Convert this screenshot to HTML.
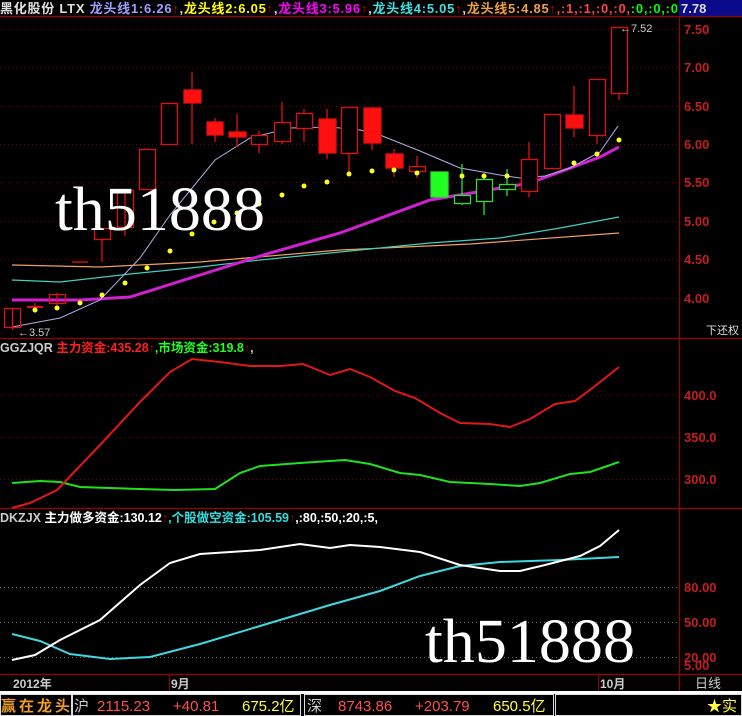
<!DOCTYPE html>
<html><head><meta charset="utf-8"><style>
html,body{margin:0;padding:0;background:#000;width:742px;height:716px;overflow:hidden}
svg{display:block}
text{font-family:"Liberation Sans","Noto Sans CJK SC",sans-serif}
text.wm{font-family:"Liberation Serif","DejaVu Serif",serif}
</style></head><body>
<svg width="742" height="716" viewBox="0 0 742 716" xmlns="http://www.w3.org/2000/svg">
<rect width="742" height="716" fill="#000"/>
<!-- header -->
<rect x="679" y="0" width="63" height="16" fill="#0a0a8a"/>
<text x="0" y="13" font-size="13" font-weight="bold" textLength="678" lengthAdjust="spacing"><tspan fill="#e0e0e0">黑化股份 LTX </tspan><tspan fill="#a0a0ff">龙头线1:6.26</tspan><tspan fill="#c00">↑</tspan><tspan fill="#ddd">,</tspan><tspan fill="#ffff00">龙头线2:6.05</tspan><tspan fill="#c00">↑</tspan><tspan fill="#ddd">,</tspan><tspan fill="#ff00ff">龙头线3:5.96</tspan><tspan fill="#c00">↑</tspan><tspan fill="#ddd">,</tspan><tspan fill="#40e0e0">龙头线4:5.05</tspan><tspan fill="#c00">↑</tspan><tspan fill="#ddd">,</tspan><tspan fill="#f0a040">龙头线5:4.85</tspan><tspan fill="#c00">↑</tspan><tspan fill="#f44">,:1,:1,:0,:0,</tspan><tspan fill="#0f0">:0,:0,:0</tspan></text>
<text x="681" y="13" font-size="13" font-weight="bold" fill="#ddd">7.78</text>
<!-- frame lines -->
<g stroke="#900" stroke-width="1.2" fill="none">
<line x1="679.5" y1="16" x2="679.5" y2="692"/>
<line x1="0" y1="338.5" x2="742" y2="338.5"/>
<line x1="0" y1="508.5" x2="742" y2="508.5"/>
<line x1="0" y1="674.5" x2="742" y2="674.5"/>
<line x1="0" y1="16.5" x2="742" y2="16.5"/>
</g>
<!-- grid -->
<g stroke="#700" stroke-width="1" stroke-dasharray="1,3">
<line x1="0" y1="29.5" x2="679" y2="29.5"/><line x1="0" y1="67.5" x2="679" y2="67.5"/>
<line x1="0" y1="106.5" x2="679" y2="106.5"/><line x1="0" y1="144.5" x2="679" y2="144.5"/>
<line x1="0" y1="182.5" x2="679" y2="182.5"/><line x1="0" y1="221.5" x2="679" y2="221.5"/>
<line x1="0" y1="259.5" x2="679" y2="259.5"/><line x1="0" y1="298.5" x2="679" y2="298.5"/>
<line x1="0" y1="395.5" x2="679" y2="395.5"/><line x1="0" y1="437.5" x2="679" y2="437.5"/><line x1="0" y1="479.5" x2="679" y2="479.5"/>
<line x1="0" y1="587.5" x2="679" y2="587.5" stroke="#666"/><line x1="0" y1="622.5" x2="679" y2="622.5" stroke="#666"/><line x1="0" y1="657.5" x2="679" y2="657.5" stroke="#666"/>
</g>
<!-- axis labels -->
<g font-size="13" font-weight="bold" fill="#c41e1e">
<text x="684" y="34">7.50</text><text x="684" y="72">7.00</text><text x="684" y="111">6.50</text><text x="684" y="149">6.00</text>
<text x="684" y="187">5.50</text><text x="684" y="226">5.00</text><text x="684" y="264">4.50</text><text x="684" y="303">4.00</text>
<text x="684" y="400">400.0</text><text x="684" y="442">350.0</text><text x="684" y="484">300.0</text>
<text x="684" y="592">80.00</text><text x="684" y="627">50.00</text><text x="684" y="662">20.00</text><text x="684" y="670">5.00</text>
</g>
<text x="706" y="334" font-size="11" fill="#ddd">下还权</text>
<!-- MA lines -->
<polyline fill="none" stroke="#f0a060" stroke-width="1.2" points="12,265 100,267 200,262 340,250 470,244 619,233"/>
<polyline fill="none" stroke="#40d0c0" stroke-width="1.2" points="12,280 60,282 130,274 200,267 260,260 340,252 430,243 500,238 560,228 619,217"/>
<polyline fill="none" stroke="#d020d0" stroke-width="3" points="12,300 80,300 130,297 200,275 270,253 340,233 430,200 530,183 600,157 619,147"/>
<polyline fill="none" stroke="#b0b0e8" stroke-width="1" points="12,327 60,318 100,300 140,258 170,215 215,160 250,138 290,128 330,127 360,130 380,135 420,151 460,168 500,175 520,178 545,176 570,168 600,152 618,126"/>
<!-- candles -->
<g stroke="#e01010" stroke-width="1.3">
<line x1="12.5" y1="308" x2="12.5" y2="330"/><rect x="4.5" y="308.5" width="16" height="19" fill="none"/>
<line x1="35" y1="303" x2="35" y2="313"/><line x1="27" y1="307" x2="43" y2="307" stroke-width="2"/>
<line x1="57" y1="293" x2="57" y2="305"/><rect x="49.5" y="294.5" width="16" height="9" fill="none"/>
<line x1="72" y1="262" x2="88" y2="262"/>
<line x1="102" y1="228" x2="102" y2="262"/><rect x="94.5" y="228.5" width="16" height="11" fill="#000"/>
<line x1="125" y1="190" x2="125" y2="236"/><rect x="117.5" y="190.5" width="16" height="37" fill="none"/>
<rect x="139.5" y="149.5" width="16" height="40" fill="none"/>
<rect x="161.5" y="103.5" width="16" height="41" fill="none"/>
<line x1="192" y1="72" x2="192" y2="144"/><rect x="184" y="90" width="17" height="13" fill="#ff1010"/>
<line x1="215" y1="118" x2="215" y2="142"/><rect x="207" y="122" width="16" height="13" fill="#ff1010"/>
<line x1="237" y1="114" x2="237" y2="147"/><rect x="229" y="132" width="17" height="5" fill="#ff1010"/>
<line x1="259" y1="131" x2="259" y2="153"/><rect x="251.5" y="135.5" width="16" height="9" fill="#000"/>
<line x1="282" y1="102" x2="282" y2="144"/><rect x="274.5" y="122.5" width="16" height="19" fill="#000"/>
<line x1="304" y1="109" x2="304" y2="142"/><rect x="296.5" y="113.5" width="16" height="15" fill="#000"/>
<line x1="327" y1="109" x2="327" y2="159"/><rect x="319" y="119" width="17" height="34" fill="#ff1010"/>
<line x1="349" y1="107" x2="349" y2="172"/><rect x="341.5" y="107.5" width="16" height="46" fill="#000"/>
<line x1="372" y1="108" x2="372" y2="150"/><rect x="364" y="108" width="17" height="35" fill="#ff1010"/>
<line x1="394" y1="149" x2="394" y2="177"/><rect x="386" y="154" width="17" height="14" fill="#ff1010"/>
<line x1="417" y1="156" x2="417" y2="178"/><rect x="409.5" y="166.5" width="16" height="5" fill="#000"/>
<line x1="529" y1="142" x2="529" y2="197"/><rect x="521.5" y="159.5" width="16" height="32" fill="#000"/>
<rect x="544.5" y="114.5" width="16" height="54" fill="none"/>
<line x1="574" y1="86" x2="574" y2="137"/><rect x="566" y="115" width="17" height="13" fill="#ff1010"/>
<line x1="597" y1="135" x2="597" y2="144"/><rect x="589.5" y="79.5" width="16" height="56" fill="#000"/>
<line x1="619" y1="93" x2="619" y2="100"/><rect x="611.5" y="27.5" width="16" height="66" fill="#000"/>
</g>
<g stroke="#30e030" stroke-width="1.3">
<rect x="431" y="172" width="17" height="25" fill="#20ff20"/>
<line x1="462" y1="164" x2="462" y2="205"/><rect x="454.5" y="195.5" width="16" height="8" fill="#000"/>
<line x1="484" y1="175" x2="484" y2="215"/><rect x="476.5" y="179.5" width="16" height="22" fill="#000"/>
<line x1="507" y1="169" x2="507" y2="196"/><rect x="499.5" y="184.5" width="16" height="5" fill="#000"/>
</g>
<!-- yellow dots -->
<g fill="#ffff20">
<circle cx="35" cy="310" r="2.5"/><circle cx="57" cy="308" r="2.5"/><circle cx="80" cy="303" r="2.5"/><circle cx="102" cy="295" r="2.5"/>
<circle cx="125" cy="283" r="2.5"/><circle cx="147" cy="268" r="2.5"/><circle cx="170" cy="251" r="2.5"/><circle cx="192" cy="234" r="2.5"/>
<circle cx="214" cy="222" r="2.5"/><circle cx="237" cy="213" r="2.5"/><circle cx="259" cy="204" r="2.5"/><circle cx="282" cy="195" r="2.5"/>
<circle cx="304" cy="186" r="2.5"/><circle cx="327" cy="182" r="2.5"/><circle cx="349" cy="174" r="2.5"/><circle cx="372" cy="171" r="2.5"/>
<circle cx="394" cy="170" r="2.5"/><circle cx="417" cy="173" r="2.5"/><circle cx="462" cy="176" r="2.5"/><circle cx="484" cy="176" r="2.5"/>
<circle cx="507" cy="176" r="2.5"/><circle cx="574" cy="163" r="2.5"/><circle cx="597" cy="154" r="2.5"/><circle cx="619" cy="140" r="2.5"/>
</g>
<text x="18" y="336" font-size="11" fill="#ccc">←3.57</text>
<text x="620" y="32" font-size="11" fill="#ccc">←7.52</text>
<!-- panel 2 -->
<text x="0" y="352" font-size="12.5" font-weight="bold"><tspan fill="#ccc">GGZJQR </tspan><tspan fill="#ff2020">主力资金:435.28</tspan><tspan fill="#a00">↑</tspan><tspan fill="#20ff20">,市场资金:319.8</tspan><tspan fill="#a00">↑</tspan><tspan fill="#ccc">,</tspan></text>
<polyline fill="none" stroke="#20e020" stroke-width="2" points="12,483 40,481 60,482 80,487 110,488 140,489 175,490 215,489 240,473 260,466 300,463 345,460 370,464 400,473 420,475 450,482 490,484 520,486 540,483 570,474 590,472 619,462"/>
<polyline fill="none" stroke="#e01818" stroke-width="2" points="12,508 30,503 57,490 100,445 140,402 170,372 192,359 220,362 250,366 280,366 303,364 330,375 350,369 370,377 395,391 415,398 440,413 460,423 490,424 510,427 530,419 555,404 575,401 595,386 619,367"/>
<!-- panel 3 -->
<text x="0" y="522" font-size="12.5" font-weight="bold"><tspan fill="#ccc">DKZJX </tspan><tspan fill="#fff">主力做多资金:130.12</tspan><tspan fill="#a00">↑</tspan><tspan fill="#30e0e0">,个股做空资金:105.59</tspan><tspan fill="#a00">↑</tspan><tspan fill="#fff">,:80,:50,:20,:5,</tspan></text>
<polyline fill="none" stroke="#40d8e0" stroke-width="2" points="12,634 40,641 70,654 110,659 150,657 200,644 260,626 330,605 380,591 420,576 460,566 500,562 560,560 619,557"/>
<polyline fill="none" stroke="#ffffff" stroke-width="2" points="12,660 35,655 60,640 100,620 140,585 170,563 200,554 260,550 300,544 330,548 350,545 380,547 420,552 460,565 500,571 520,571 545,565 580,556 600,546 619,530"/>
<!-- watermarks -->
<text class="wm" x="55" y="230" font-size="62" fill="#fff" textLength="210" lengthAdjust="spacingAndGlyphs">th51888</text>
<text class="wm" x="425" y="662" font-size="62" fill="#fff" textLength="210" lengthAdjust="spacingAndGlyphs">th51888</text>
<!-- date row -->
<g stroke="#900"><line x1="169.5" y1="675" x2="169.5" y2="691"/><line x1="598.5" y1="675" x2="598.5" y2="691"/></g>
<g font-size="12" font-weight="bold" fill="#ccc"><text x="13" y="688">2012年</text><text x="171" y="688">9月</text><text x="600" y="688">10月</text></g>
<text x="695" y="688" font-size="13" fill="#ccc">日线</text>
<!-- status bar -->
<rect x="0" y="691" width="742" height="3" fill="#fff"/>
<g fill="none" stroke="#ddd" stroke-width="1"><rect x="0.5" y="694.5" width="71" height="21"/><rect x="72.5" y="694.5" width="228" height="21"/><rect x="304.5" y="694.5" width="249" height="21"/><rect x="555.5" y="694.5" width="186" height="21"/></g>
<text x="1" y="711" font-size="15" font-weight="bold" fill="#f0a020" textLength="69">赢在龙头</text>
<g font-size="15">
<text x="74" y="711" fill="#ccc">沪</text><text x="97" y="711" fill="#ff5050">2115.23</text><text x="173" y="711" fill="#ff5050">+40.81</text><text x="242" y="711" fill="#ffff40">675.2亿</text>
<text x="307" y="711" fill="#ccc">深</text><text x="338" y="711" fill="#ff5050">8743.86</text><text x="415" y="711" fill="#ff5050">+203.79</text><text x="493" y="711" fill="#ffff40">650.5亿</text>
<text x="707" y="711" fill="#ffff40">★实</text>
</g>
</svg>
</body></html>
